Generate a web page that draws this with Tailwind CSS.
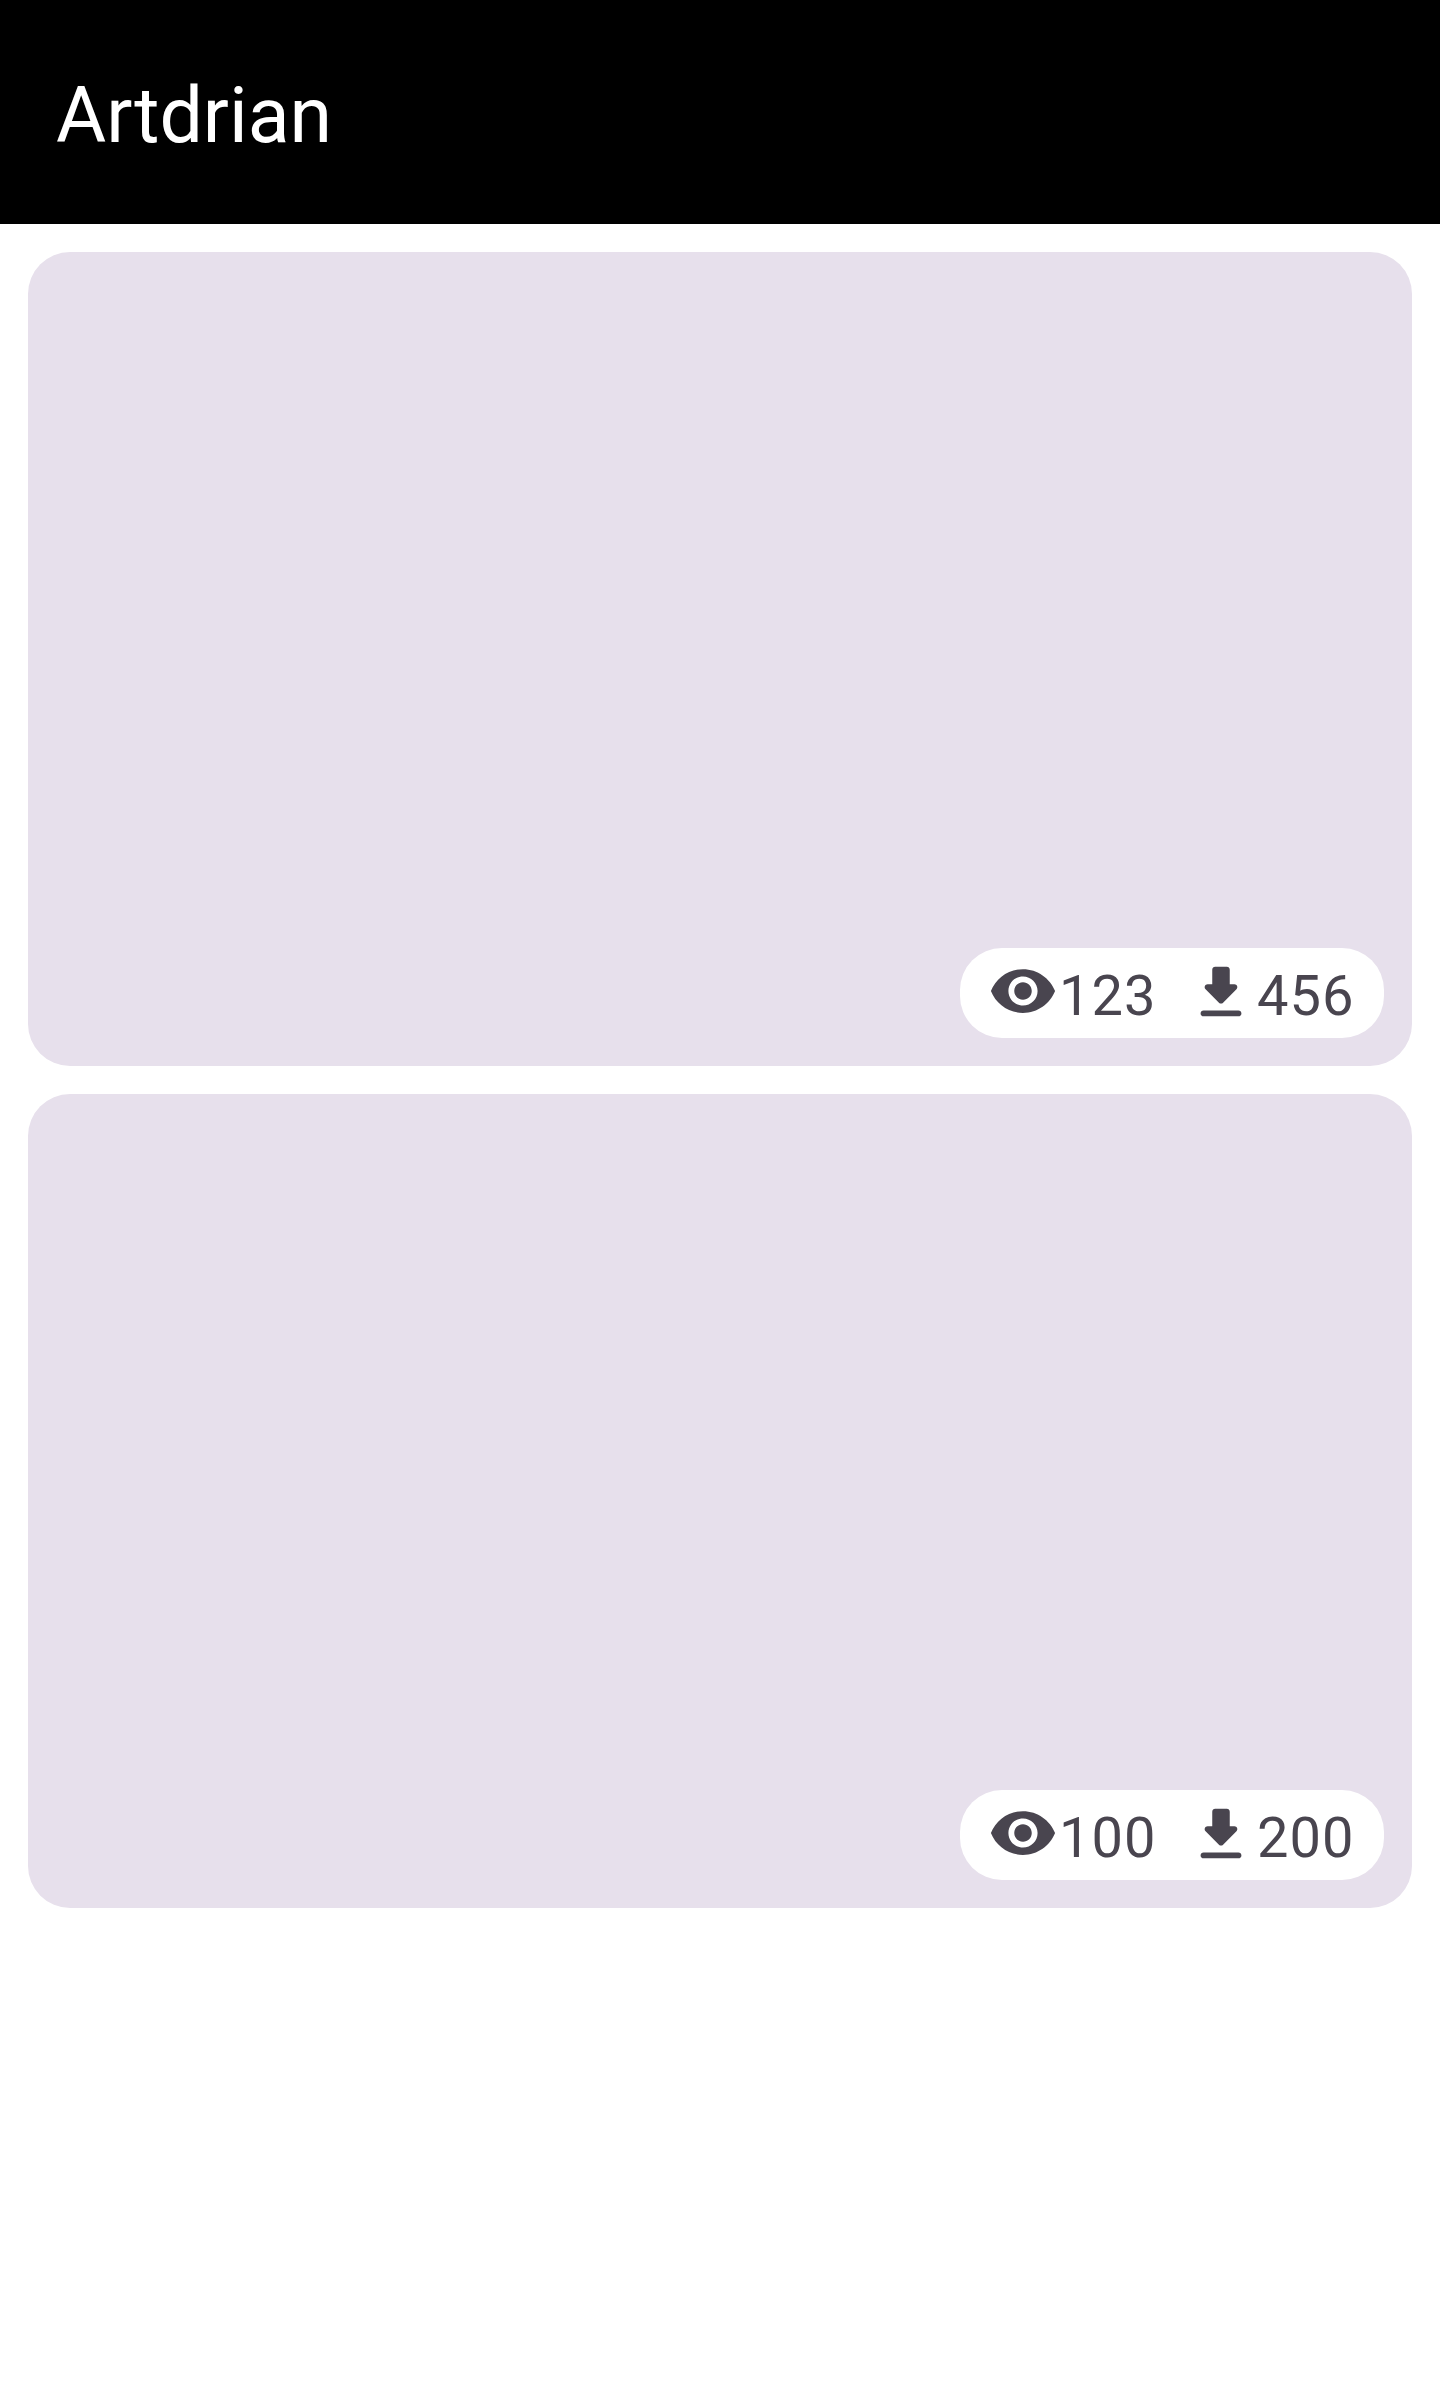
<!DOCTYPE html>
<html lang="en">
<head>
<meta charset="utf-8">
<title>Artdrian</title>
<script src="https://cdn.jsdelivr.net/npm/@tailwindcss/browser@4"></script>
</head>
<body class="min-h-screen bg-white font-['Roboto',sans-serif]">
<svg class="hidden">
  <symbol id="eye" viewBox="0 0 24 24"><path d="M12 4.5C7 4.5 2.73 7.61 1 12c1.73 4.39 6 7.5 11 7.5s9.27-3.11 11-7.5c-1.73-4.39-6-7.5-11-7.5zM12 17c-2.76 0-5-2.24-5-5s2.24-5 5-5 5 2.24 5 5-2.24 5-5 5zm0-8c-1.66 0-3 1.34-3 3s1.34 3 3 3 3-1.34 3-3-1.34-3-3-3z"/></symbol>
  <symbol id="download" viewBox="0 0 24 24"><path d="M16.59 9H15V4c0-.55-.45-1-1-1h-4c-.55 0-1 .45-1 1v5H7.41c-.89 0-1.33 1.08-.7 1.71l4.59 4.59c.39.39 1.02.39 1.41 0l4.59-4.59c.63-.63.19-1.71-.7-1.71zM5 19c0 .55.45 1 1 1h12c.55 0 1-.45 1-1s-.45-1-1-1H6c-.55 0-1 .45-1 1z"/></symbol>
</svg>
<header class="flex h-[224px] items-center bg-black px-14 pt-2">
  <h1 class="text-[77px] leading-[98px] text-white">Artdrian</h1>
</header>
<main class="flex flex-col gap-7 p-7">
  <article class="flex h-[814px] items-end justify-end rounded-[42px] bg-[#e7e0ec] p-7">
    <div class="flex h-[90px] w-[424px] gap-7 rounded-[42px] bg-white px-7 text-[56px] leading-[96px] tracking-[1px] text-[#49454f]">
      <div class="flex w-[170px] gap-px"><svg class="mt-2 size-[70px] shrink-0 fill-current"><use href="#eye"/></svg><span>123</span></div>
      <div class="flex w-[170px] gap-px"><svg class="mt-[9.5px] size-[70px] shrink-0 fill-current"><use href="#download"/></svg><span>456</span></div>
    </div>
  </article>
  <article class="flex h-[814px] items-end justify-end rounded-[42px] bg-[#e7e0ec] p-7">
    <div class="flex h-[90px] w-[424px] gap-7 rounded-[42px] bg-white px-7 text-[56px] leading-[96px] tracking-[1px] text-[#49454f]">
      <div class="flex w-[170px] gap-px"><svg class="mt-2 size-[70px] shrink-0 fill-current"><use href="#eye"/></svg><span>100</span></div>
      <div class="flex w-[170px] gap-px"><svg class="mt-[9.5px] size-[70px] shrink-0 fill-current"><use href="#download"/></svg><span>200</span></div>
    </div>
  </article>
</main>
</body>
</html>
